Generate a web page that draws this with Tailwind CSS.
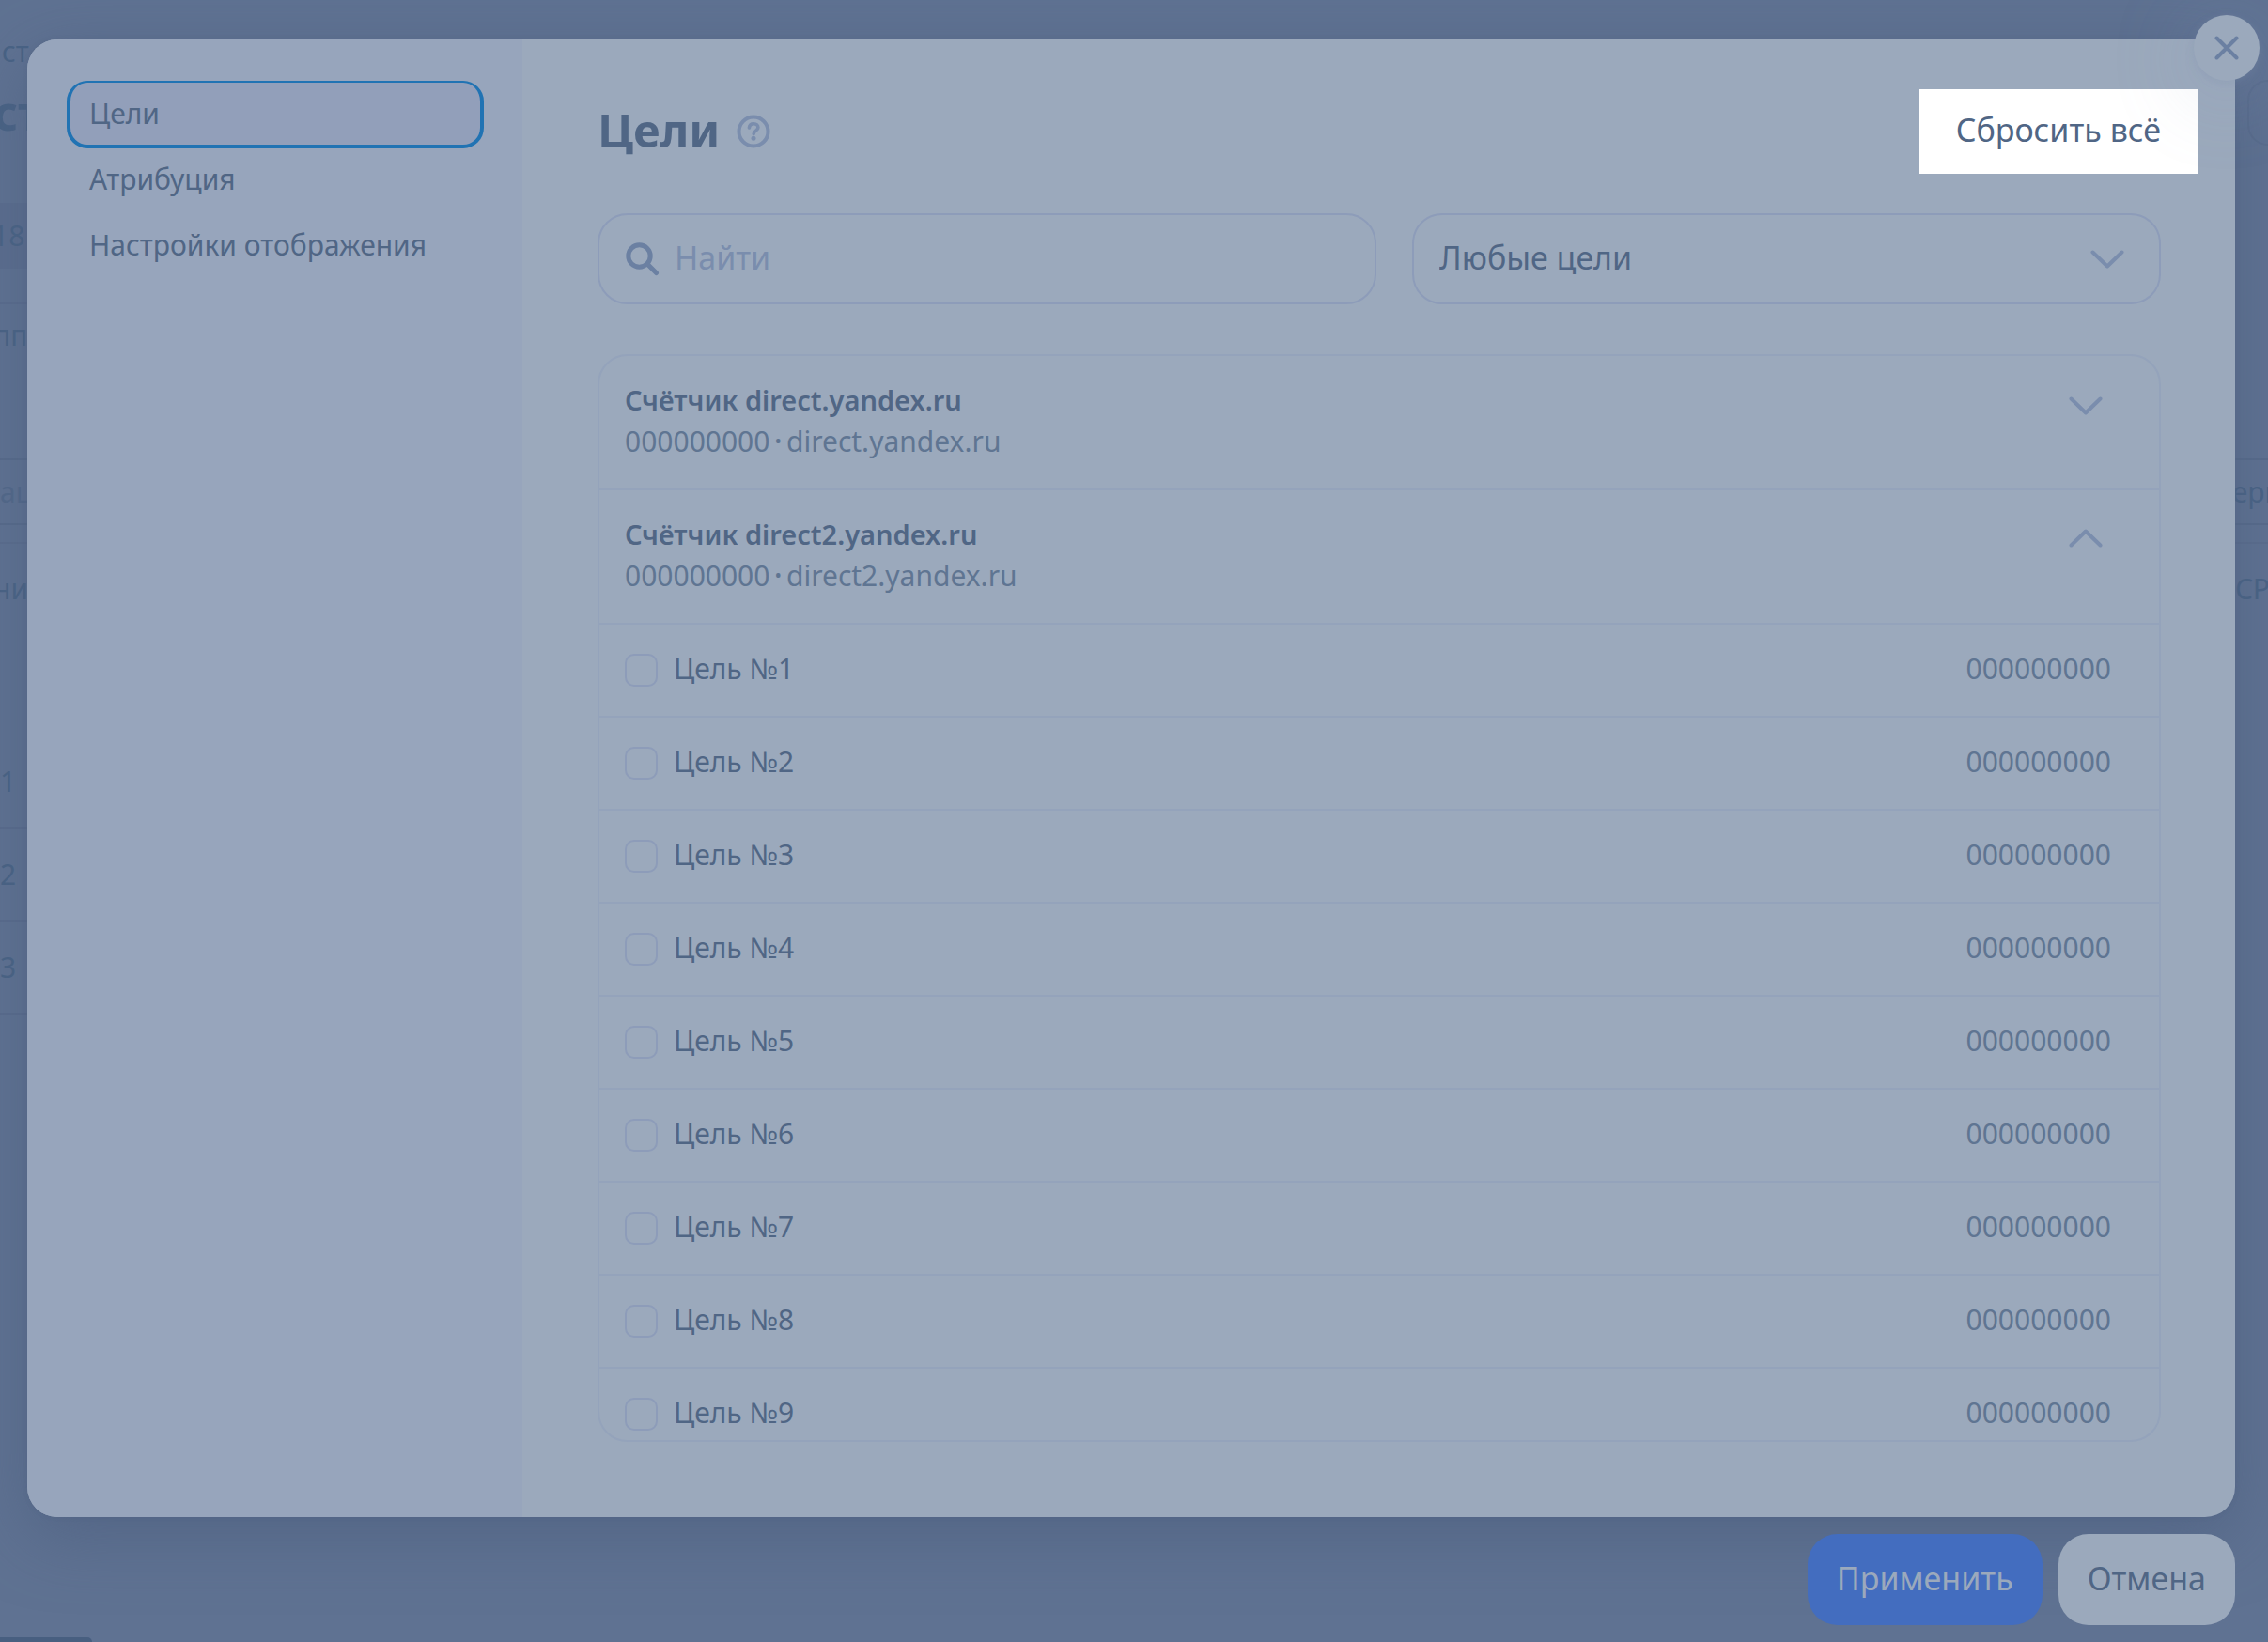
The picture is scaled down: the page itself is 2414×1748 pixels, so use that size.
<!DOCTYPE html>
<html lang="ru">
<head>
    <meta charset="utf-8">
    <title>Цели</title>
    <script src="https://cdn.jsdelivr.net/npm/@tailwindcss/browser@4"></script>
</head>

<body class="relative min-h-screen overflow-hidden bg-[#5f7292] font-['Noto_Sans',sans-serif] text-[30px] leading-[44px] text-[#506685]">
    <!-- report page under the dialog -->
    <div class="absolute inset-0 flex flex-col overflow-hidden text-[#486284]" aria-hidden="true">
        <div class="flex h-[85px] items-end pb-[8px] pl-[2px]">ст</div>
        <div class="flex h-[70px] items-center justify-between">
            <span class="-ml-[7px] text-[50px] font-bold">ст</span>
            <span class="-mr-[60px] h-[70px] w-[82px] rounded-[22px] border-2 border-[#5a6d8d]"></span>
        </div>
        <div class="mt-[61px] flex h-[70px] w-[60px] items-center bg-[#5b6d8e]"><span class="-ml-[8px]">18</span></div>
        <div class="mt-[36px] flex h-[68px] w-[60px] items-center border-t-2 border-[#5a6c8d]"><span class="-ml-[7px]">пп</span></div>
        <div class="mt-[98px] flex h-[71px] items-center justify-between border-y-2 border-[#576a8a]">
            <span class="text-[#526889]">ац</span>
            <span class="-mr-[15px]">ерн</span>
        </div>
        <div class="mt-[18px] flex h-[97px] items-center justify-between border-t-2 border-[#5b6d8d]">
            <span class="-ml-[7px]">ни</span>
            <span class="-mr-[2px]">CP</span>
        </div>
        <div class="mt-[109px] flex h-[99px] w-[60px] items-center border-b-2 border-[#596b8c]">1</div>
        <div class="flex h-[99px] w-[60px] items-center border-b-2 border-[#596b8c]">2</div>
        <div class="flex h-[99px] w-[60px] items-center border-b-2 border-[#596b8c]">3</div>
        <div class="mt-auto h-[5px] w-[98px] rounded-tr-[10px] bg-[#485f80]"></div>
    </div>

    <div class="relative flex h-screen flex-col pt-[42px] pr-[35px] pb-[18px] pl-[29px]">
        <!-- dialog -->
        <div role="dialog" aria-label="Цели" class="flex min-h-0 flex-1 overflow-hidden rounded-[32px] bg-[#9ba9bc] shadow-[0_0_4px_#50628366,0_20px_70px_#4d5f80b3]">
            <nav class="grid w-[527px] shrink-0 auto-rows-[70px] bg-[#97a5bc] pt-[44px] pr-[41px] pl-[42px]">
                <button class="h-[72px] rounded-[22px] border-4 border-t-2 border-[#2173b3] bg-[#929fba] px-[20px] text-left">Цели</button>
                <button class="px-[24px] text-left">Атрибуция</button>
                <button class="px-[24px] text-left">Настройки отображения</button>
            </nav>

            <main class="flex min-w-0 flex-1 flex-col pt-[53px] pb-[80px] pl-[80px]">
                <div class="flex h-[90px] items-center pr-[40px]">
                    <h1 class="pb-[4px] text-[49px] font-bold">Цели</h1>
                    <button class="ml-[18px]" aria-label="Справка">
                        <svg class="size-[36px] text-[#7a8dad]" viewBox="0 0 36 36" fill="none" stroke="currentColor" stroke-linecap="round" stroke-linejoin="round">
                            <circle cx="18" cy="18" r="15.5" stroke-width="4" />
                            <path d="M13.4 14c.3-2.700 2.200-4.300 4.800-4.300 2.800 0 4.700 1.600 4.700 4 0 3.300-4.700 3.500-4.700 6.800" stroke-width="3.600" />
                            <circle cx="18" cy="25.300" r="2.500" fill="currentColor" stroke="none" />
                        </svg>
                    </button>
                    <button class="ml-auto h-full bg-white px-[39px] pb-[4px] text-[34px]">Сбросить всё</button>
                </div>

                <div class="mt-[42px] mr-[79px] grid grid-cols-[829fr_797fr] gap-[38px] text-[34px]">
                    <label class="flex h-[97px] items-center rounded-[32px] border-2 border-[#8d9cb9] pl-[28px]">
                        <svg class="size-[36px] shrink-0 text-[#6b80a2]" viewBox="0 0 36 36" fill="none" stroke="currentColor" stroke-width="5" stroke-linecap="round">
                            <circle cx="14.500" cy="14.500" r="11.700" />
                            <path d="M23.500 23.500 32.500 32.500" />
                        </svg>
                        <input type="text" placeholder="Найти" aria-label="Найти" class="ml-[16px] min-w-0 flex-1 bg-transparent pb-[4px] outline-none placeholder:text-[#7a8dad]">
                    </label>
                    <div class="relative">
                        <select aria-label="Тип целей" class="h-[97px] w-full appearance-none rounded-[32px] border-2 border-[#8d9cb9] bg-transparent px-[27px] pb-[4px]">
                            <option>Любые цели</option>
                        </select>
                        <svg class="pointer-events-none absolute top-[39px] right-[39px] h-[20px] w-[36px] text-[#7a8dad]" viewBox="0 0 36 20" fill="none" stroke="currentColor" stroke-width="4" stroke-linecap="round" stroke-linejoin="round">
                            <path d="M2.500 2.500 18 17.500 33.500 2.500" />
                        </svg>
                    </div>
                </div>

                <!-- counters with their goals -->
                <div class="mt-[53px] mr-[79px] min-h-0 flex-1 overflow-hidden rounded-[32px] border-2 border-[#94a3bb]">
                    <button class="flex w-full justify-between pt-[25px] pr-[60px] pb-[28px] pl-[27px] text-left">
                        <span class="flex flex-col">
                            <span class="text-[29px] font-semibold">Счётчик direct.yandex.ru</span>
                            <span class="flex gap-[5px] text-[#5f7592]">000000000 <span class="text-[20px]">•</span> direct.yandex.ru</span>
                        </span>
                        <svg class="mt-[18px] h-[20px] w-[36px] text-[#7a8dad]" viewBox="0 0 36 20" fill="none" stroke="currentColor" stroke-width="4" stroke-linecap="round" stroke-linejoin="round">
                            <path d="M2.500 2.500 18 17.500 33.500 2.500" />
                        </svg>
                    </button>
                    <button class="flex w-full justify-between border-t-2 border-[#94a3bb] pt-[25px] pr-[60px] pb-[28px] pl-[27px] text-left" aria-expanded="true">
                        <span class="flex flex-col">
                            <span class="text-[29px] font-semibold">Счётчик direct2.yandex.ru</span>
                            <span class="flex gap-[5px] text-[#5f7592]">000000000 <span class="text-[20px]">•</span> direct2.yandex.ru</span>
                        </span>
                        <svg class="mt-[16px] h-[20px] w-[36px] text-[#7a8dad]" viewBox="0 0 36 20" fill="none" stroke="currentColor" stroke-width="4" stroke-linecap="round" stroke-linejoin="round">
                            <path d="M2.500 17.500 18 2.500 33.500 17.500" />
                        </svg>
                    </button>
                    <ul id="goals"></ul>
                </div>
            </main>
        </div>

        <div class="mt-[18px] flex justify-end gap-[17px] text-[34px]">
            <button class="h-[97px] rounded-[32px] bg-[#436dbf] px-[31px] pb-[4px] text-[#9ba9bc]">Применить</button>
            <button class="h-[97px] rounded-[32px] bg-[#9ba9bc] px-[31px] pb-[4px]">Отмена</button>
        </div>

        <button class="absolute top-[16px] right-[9px] flex size-[70px] items-center justify-center rounded-full bg-[#9ba9bc] text-[#6b80a2] shadow-[0_2px_8px_#7f90ac4d,0_12px_90px_#8c9cc44d]" aria-label="Закрыть">
            <svg class="size-[26px]" viewBox="0 0 26 26" fill="none" stroke="currentColor" stroke-width="4" stroke-linecap="round">
                <path d="M2.500 2.500 23.500 23.500M23.500 2.500 2.500 23.500" />
            </svg>
        </button>
    </div>

    <script>
        const list = document.getElementById("goals");
        for (let i = 1; i <= 9; i++) {
            list.insertAdjacentHTML("beforeend", `
                <li class="border-t-2 border-[#94a3bb]">
                    <label class="flex h-[97px] items-center pr-[51px] pl-[27px]">
                        <input type="checkbox" class="size-[35px] appearance-none rounded-[10px] border-2 border-[#8d9cb9]">
                        <span class="ml-[17px] pb-[4px]">Цель №${i}</span>
                        <span class="ml-auto pb-[4px] text-[#5f7592]">000000000</span>
                    </label>
                </li>`);
        }
    </script>
</body>
</html>
